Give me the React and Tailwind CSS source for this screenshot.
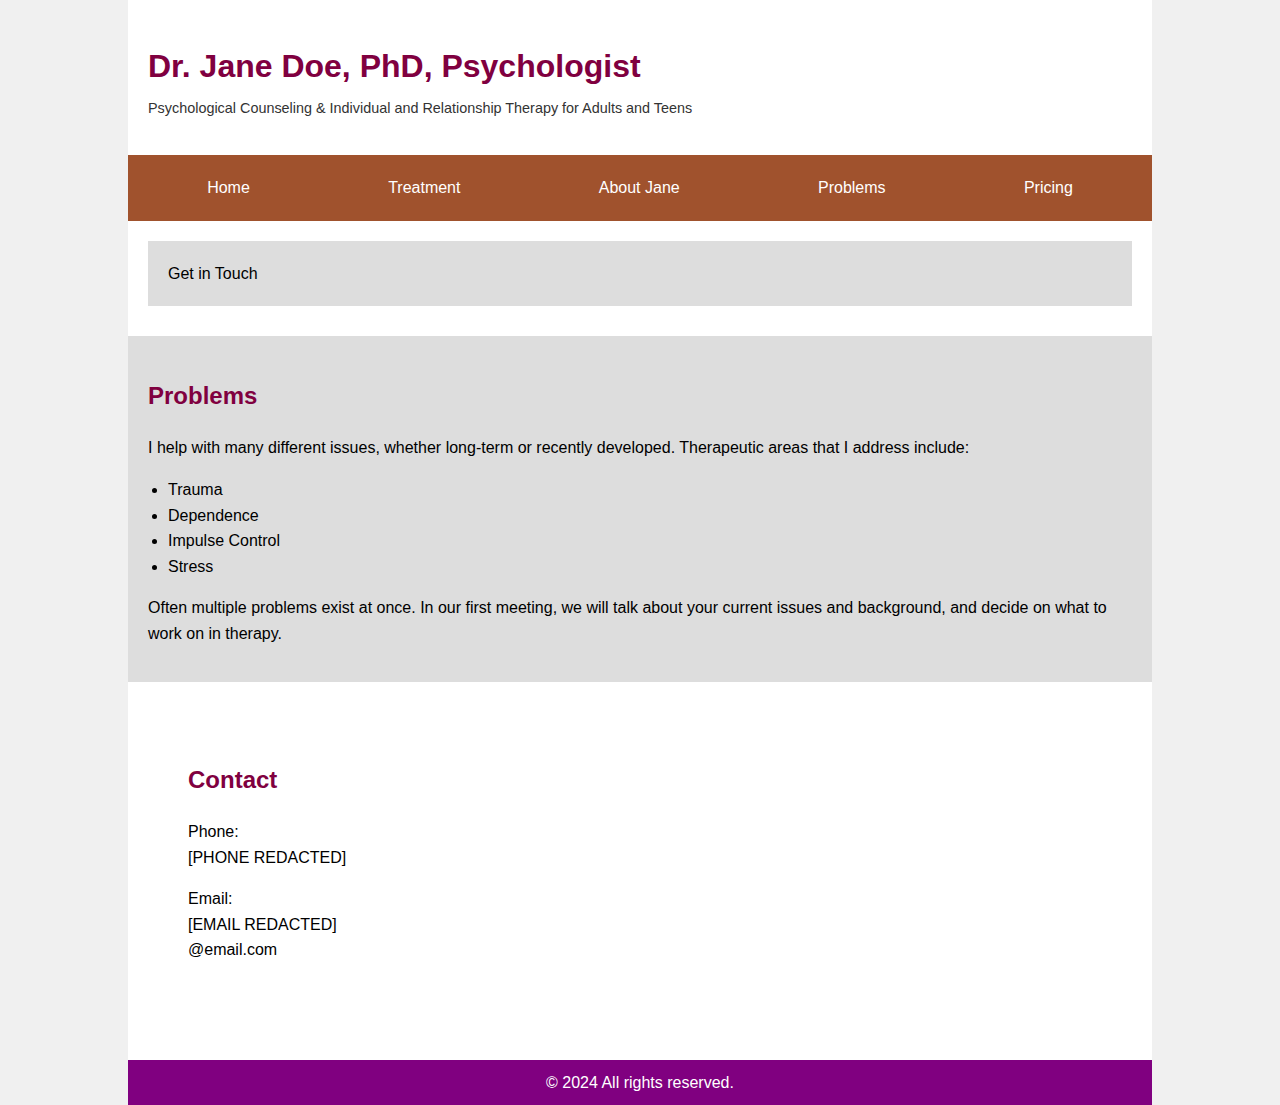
import React from "react";

export default function App() {
  const font = { fontFamily: '"Liberation Sans", Arial, sans-serif' };
  const nav = ["Home", "Treatment", "About Jane", "Problems", "Pricing"];
  return (
    <div className="min-h-[1105px] bg-[#f0f0f0] text-black" style={font}>
      <div className="mx-auto w-[1024px] bg-white">
        <header className="px-5 pt-[41px] pb-[36px]">
          <h1 className="text-[32px] leading-[51px] font-bold text-[#800040]">
            Dr. Jane Doe, PhD, Psychologist
          </h1>
          <p className="mt-[5px] text-[14.4px] leading-[22px] text-[#333]">
            Psychological Counseling &amp; Individual and Relationship Therapy for Adults and Teens
          </p>
        </header>
        <nav className="flex h-[66px] items-center justify-around bg-[#a0522d] px-[10px]">
          {nav.map((n) => (
            <a key={n} className="text-[16px] leading-[26px] text-white">
              {n}
            </a>
          ))}
        </nav>
        <section className="px-5 pt-5 pb-[30px]">
          <div className="bg-[#dddddd] p-5 text-[16px] leading-[25px]">Get in Touch</div>
        </section>
        <section className="bg-[#dddddd] px-5 pt-[41px] pb-[19px] text-[16px] leading-[25.6px]">
          <h2 className="text-[24px] leading-[38.4px] font-bold text-[#800040]">Problems</h2>
          <p className="mt-[20px]">
            I help with many different issues, whether long-term or recently developed. Therapeutic areas that I address include:
          </p>
          <ul className="mt-4 list-disc pl-5">
            <li>Trauma</li>
            <li>Dependence</li>
            <li>Impulse Control</li>
            <li>Stress</li>
          </ul>
          <p className="mt-4 mb-4">
            Often multiple problems exist at once. In our first meeting, we will talk about your current issues and background, and decide on what to work on in therapy.
          </p>
        </section>
        <section className="px-[60px] pt-[79px] pb-[97px] text-[16px] leading-[25.6px]">
          <h2 className="text-[24px] leading-[38.4px] font-bold text-[#800040]">Contact</h2>
          <p className="mt-[20px]">
            Phone:
            <br />
            [PHONE REDACTED]
          </p>
          <p className="mt-4">
            Email:
            <br />
            [EMAIL REDACTED]
            <br />
            @email.com
          </p>
        </section>
        <footer className="bg-[#800080] py-[10px] text-center text-[16px] leading-[25.6px] text-white">
          © 2024 All rights reserved.
        </footer>
      </div>
    </div>
  );
}
